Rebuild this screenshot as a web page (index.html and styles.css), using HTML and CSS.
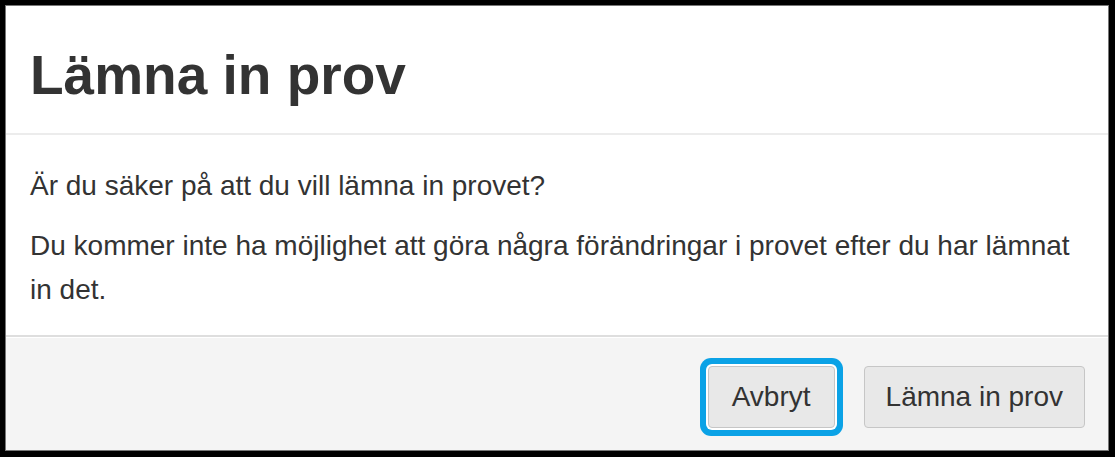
FILE: index.html
```html
<!DOCTYPE html>
<html lang="sv">
<head>
  <meta charset="UTF-8" />
  <meta name="viewport" content="width=device-width, initial-scale=1.0"/>
  <title>Lämna in prov</title>
  <link rel="stylesheet" href="styles.css">
</head>
<body>
  <div class="dialog">
    <header class="dialog-header">
      <h1 class="dialog-title">Lämna in prov</h1>
    </header>
    <main class="dialog-body">
      <p>Är du säker på att du vill lämna in provet?</p>
      <p>Du kommer inte ha möjlighet att göra några förändringar i provet efter du har lämnat in det.</p>
    </main>
    <footer class="dialog-footer">
      <button class="btn btn-focus">Avbryt</button>
      <button class="btn">Lämna in prov</button>
    </footer>
  </div>
</body>
</html>
```

FILE: styles.css
```css
:root {
  --text: #333333;
  --line: #ececec;
  --footer-bg: #f4f4f4;
  --btn-bg: #e8e8e8;
  --btn-border: #c6c6c6;
  --focus: #0ba2e6;
}
* {
  margin: 0;
  padding: 0;
  box-sizing: border-box;
}
html, body {
  background: #000;
}
body {
  font-family: 'Liberation Sans', Arial, sans-serif;
  color: var(--text);
  padding: 5px 6px 6px 5px;
}
.dialog {
  background: #fff;
  border: 1px solid #777;
}
.dialog-header {
  padding: 36px 24px 25px;
  border-bottom: 2px solid var(--line);
}
.dialog-title {
  font-size: 55px;
  font-weight: 700;
  line-height: 66px;
}
.dialog-body {
  padding: 29px 24px 23px;
  font-size: 28px;
  line-height: 44px;
}
.dialog-body p {
  margin-bottom: 16px;
}
.dialog-body p:last-child {
  margin-bottom: 0;
}
.dialog-footer {
  background: var(--footer-bg);
  border-top: 2px solid #dedede;
  box-shadow: inset 0 1px 0 #fff;
  padding: 29px 23px 22px;
  display: flex;
  justify-content: flex-end;
  gap: 29px;
}
.btn {
  font-family: inherit;
  font-size: 28px;
  color: var(--text);
  background: var(--btn-bg);
  border: 1px solid var(--btn-border);
  border-radius: 4px;
  height: 62px;
  padding: 0 21px;
  cursor: pointer;
}
.btn-focus {
  padding: 0 23px;
  box-shadow: 0 0 0 2px #fff, 0 0 0 8px var(--focus);
  border-radius: 4px;
}
```
